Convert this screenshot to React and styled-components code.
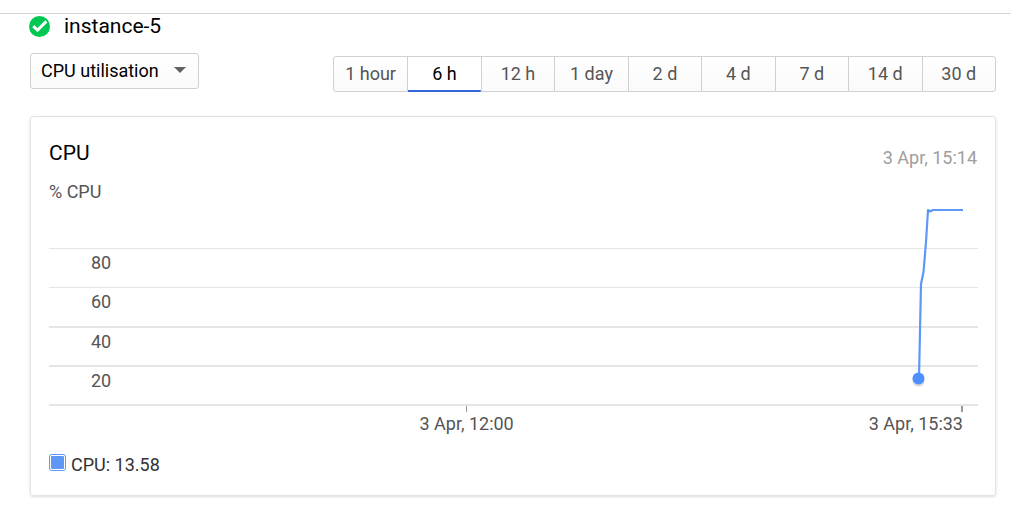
import React, { useState } from "react";
import styled, { createGlobalStyle } from "styled-components";

const GlobalStyle = createGlobalStyle`
  *, *::before, *::after { box-sizing: border-box; }
  body {
    margin: 0;
    background: #fff;
    color: #000;
    font-family: Roboto, "Liberation Sans", sans-serif;
    font-size: 18px;
    line-height: 24px;
  }
  button, select, input { font: inherit; }
`;

const TopBar = styled.header`
  height: 14px;
  border-bottom: 1px solid #d5d5d5;
`;

const Page = styled.main`
  padding: 0 15px 24px 30px;
`;

const TitleRow = styled.div`
  display: flex;
  align-items: center;
  gap: 14px;
  height: 24px;
`;

const StatusIcon = styled.svg`
  width: 21px;
  height: 21px;
  margin-left: -1px;
`;

const InstanceName = styled.h1`
  margin: 0;
  font-size: 21px;
  font-weight: 400;
`;

const Toolbar = styled.div`
  display: flex;
  justify-content: space-between;
  align-items: flex-start;
  padding-top: 15px;
`;

const SelectWrap = styled.div`
  display: grid;
  align-items: center;
  width: 169px;
`;

const MetricSelect = styled.select`
  grid-area: 1 / 1;
  appearance: none;
  width: 100%;
  height: 36px;
  padding: 0 32px 0 10px;
  border: 1px solid #d0d0d0;
  border-radius: 3px;
  background: linear-gradient(#fff, #fafafa);
  color: #000;
`;

const Caret = styled.svg`
  grid-area: 1 / 1;
  justify-self: end;
  align-self: start;
  width: 12px;
  height: 6px;
  margin: 14px 13px 0 0;
  pointer-events: none;
`;

const RangeGroup = styled.div`
  display: grid;
  grid-template-columns: repeat(9, 1fr);
  width: 68.65%;
  height: 36px;
  margin-top: 3px;
  border: 1px solid #d0d0d0;
  border-radius: 3px;
  background: linear-gradient(#fff, #fafafa);
`;

const RangeButton = styled.button`
  height: 35px;
  padding: 0 0 2px;
  border: 0;
  border-left: ${(p) => (p.$first ? 0 : "1px solid #d0d0d0")};
  background: ${(p) =>
    p.$active
      ? "linear-gradient(#3367d6, #3367d6) bottom / 100% 2px no-repeat #fff"
      : "transparent"};
  color: ${(p) => (p.$active ? "#000" : "#555")};
  white-space: nowrap;
`;

const Card = styled.section`
  margin-top: 24px;
  padding: 24px 18px 18px;
  border: 1px solid #e4e4e4;
  border-radius: 3px;
  box-shadow: 0 1px 3px rgba(0, 0, 0, 0.14);
`;

const CardHeader = styled.div`
  display: flex;
  justify-content: space-between;
  align-items: flex-start;
`;

const CardTitle = styled.h2`
  margin: 0;
  font-size: 21px;
  font-weight: 400;
`;

const HoverTime = styled.span`
  padding-top: 5px;
  color: #9e9e9e;
`;

const Unit = styled.div`
  padding-top: 10px;
  color: #555;
`;

const Plot = styled.div`
  position: relative;
  margin-right: -1px;
  padding-top: 44px;
`;

const GridRow = styled.div`
  height: 39px;
  padding: 2px 0 0 42px;
  border-top: ${(p) => p.$line}px solid #e5e5e5;
  color: #555;
`;

const Baseline = styled.div`
  height: 2px;
  background: #e5e5e5;
`;

const Series = styled.svg`
  position: absolute;
  right: 0;
  bottom: 0;
  width: 80px;
  height: 204px;
  overflow: visible;
`;

const Axis = styled.div`
  display: grid;
  grid-template-columns: 90% 10%;
  color: #555;
`;

const Tick = styled.div`
  display: flex;
  flex-direction: column;
  align-items: ${(p) => (p.$end ? "flex-end" : "center")};
  padding-right: ${(p) => (p.$end ? 14 : 0)}px;
  white-space: nowrap;

  &::before {
    content: "";
    width: ${(p) => (p.$end ? 2 : 1)}px;
    height: 6px;
    background: #999;
  }
`;

const Legend = styled.label`
  display: flex;
  align-items: center;
  gap: 5px;
  width: max-content;
  margin-top: 17px;
  color: #333;
`;

const LegendBox = styled.input`
  appearance: none;
  width: 17px;
  height: 17px;
  margin: 0 0 5px;
  padding: 1px;
  border: 1px solid #5e97f6;
  border-radius: 3px;

  &:checked {
    background: #5e97f6 content-box;
  }
`;

const ranges = ["1 hour", "6 h", "12 h", "1 day", "2 d", "4 d", "7 d", "14 d", "30 d"];

const gridRows = [
  { label: "80", line: 1 },
  { label: "60", line: 1 },
  { label: "40", line: 2 },
  { label: "20", line: 2 },
];

export default function App() {
  const [range, setRange] = useState("6 h");
  const [shown, setShown] = useState(true);

  return (
    <>
      <GlobalStyle />
      <TopBar />
      <Page>
        <TitleRow>
          <StatusIcon viewBox="0 0 21 21" aria-hidden="true">
            <circle cx="10.5" cy="10.5" r="10.5" fill="#00c853" />
            <path d="M4.200 10.200 8.500 14.200 17.300 5.400" fill="none" stroke="#fff" strokeWidth="3" />
          </StatusIcon>
          <InstanceName>instance-5</InstanceName>
        </TitleRow>

        <Toolbar>
          <SelectWrap>
            <MetricSelect aria-label="Metric">
              <option>CPU utilisation</option>
            </MetricSelect>
            <Caret viewBox="0 0 12 6" aria-hidden="true">
              <path d="M0 0H12L6 6Z" fill="#616161" />
            </Caret>
          </SelectWrap>
          <RangeGroup role="group" aria-label="Time range">
            {ranges.map((r, i) => (
              <RangeButton
                key={r}
                type="button"
                $first={i === 0}
                $active={r === range}
                aria-pressed={r === range}
                onClick={() => setRange(r)}
              >
                {r}
              </RangeButton>
            ))}
          </RangeGroup>
        </Toolbar>

        <Card>
          <CardHeader>
            <CardTitle>CPU</CardTitle>
            <HoverTime>3 Apr, 15:14</HoverTime>
          </CardHeader>
          <Unit>% CPU</Unit>
          <Plot>
            {gridRows.map((row) => (
              <GridRow key={row.label} $line={row.line}>
                {row.label}
              </GridRow>
            ))}
            <Baseline />
            {shown && (
              <Series viewBox="0 0 80 204" aria-hidden="true">
                <path
                  d="M21 176 L23 82 L25.500 70 L28 40 L30 8 L32 9.500 L35 8 H65"
                  fill="none"
                  stroke="#5e97f6"
                  strokeWidth="2.2"
                  strokeLinejoin="round"
                />
                <ellipse cx="20.500" cy="179" rx="6" ry="5.500" fill="#000" opacity="0.14" />
                <circle cx="20.500" cy="176.500" r="6" fill="#4d90fe" />
              </Series>
            )}
          </Plot>
          <Axis>
            <Tick>3 Apr, 12:00</Tick>
            <Tick $end>3 Apr, 15:33</Tick>
          </Axis>
          <Legend>
            <LegendBox
              type="checkbox"
              checked={shown}
              onChange={(e) => setShown(e.target.checked)}
            />
            CPU: 13.58
          </Legend>
        </Card>
      </Page>
    </>
  );
}
